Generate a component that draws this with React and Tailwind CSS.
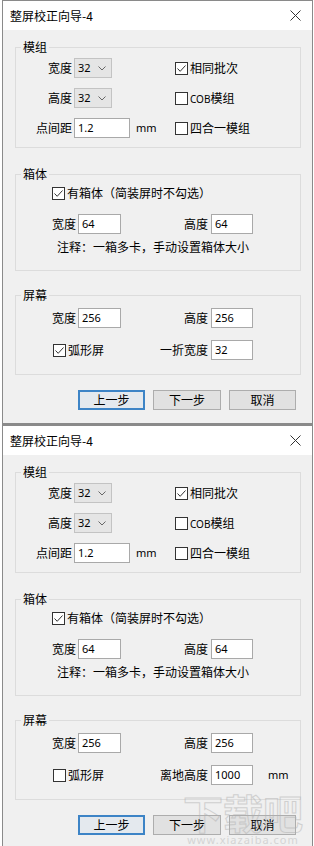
const ui = "font-['Noto_Sans_CJK_SC','Noto_Sans',sans-serif]"
const num = "font-['Noto_Sans','Liberation_Sans',sans-serif]"

function Check({ checked }) {
  return (
    <span className="flex h-[13px] w-[13px] shrink-0 items-center justify-center border border-[#333] bg-white">
      {checked && (
        <svg width="11" height="11" viewBox="0 0 11 11">
          <path d="M1.5 5.5 L4.2 8.3 L9.5 2.5" fill="none" stroke="#333" strokeWidth="1" />
        </svg>
      )}
    </span>
  )
}

function Combo({ value }) {
  return (
    <div className="ml-[2px] flex h-[20px] w-[38px] items-center justify-between border border-[#c3c3c3] bg-[#e5e5e5] pl-[3px] pr-[5px]">
      <span className={`${num} text-[11px] text-black`}>{value}</span>
      <svg width="8" height="5" viewBox="0 0 8 5">
        <path d="M0.5 0.5 L4 4 L7.5 0.5" fill="none" stroke="#666" strokeWidth="1" />
      </svg>
    </div>
  )
}

function Field({ value, w }) {
  return (
    <div className={`flex h-[20px] items-center border border-[#a9a9a9] bg-white pl-[3px] ${w}`}>
      <span className={`${num} text-[11px] text-black`}>{value}</span>
    </div>
  )
}

function Group({ title, className, children }) {
  return (
    <div className={`relative border border-[#dcdcdc] ${className}`}>
      <span className="absolute left-[5px] top-[-9px] bg-[#f0f0f0] px-[2px] leading-[16px]">{title}</span>
      {children}
    </div>
  )
}

function SizeRow({ a, b, className }) {
  return (
    <div className={`flex h-[20px] items-center ${className}`}>
      <span className="w-[60px] text-right">宽度</span>
      <Field value={a} w="ml-[2px] w-[43px]" />
      <span className="w-[87px] text-right">高度</span>
      <Field value={b} w="ml-[3px] w-[42px]" />
    </div>
  )
}

function Dialog({ second }) {
  return (
    <div className={`relative ml-[2px] flex h-[425px] w-[311px] flex-col border-x border-t border-b-2 border-[#8a8a8a] bg-[#f0f0f0] text-[12px] leading-[16px] text-black ${ui}`}>
      <div className="flex h-[29px] items-center justify-between bg-white pl-[7px] pr-[11px]">
        <span>整屏校正向导-4</span>
        <svg width="11" height="11" viewBox="0 0 11 11">
          <path d="M0.5 0.5 L10.5 10.5 M10.5 0.5 L0.5 10.5" stroke="#333" strokeWidth="1" />
        </svg>
      </div>

      <div className="flex-1 pl-[12px] pr-[11px]">
        <Group title="模组" className="mt-[17px] flex flex-col gap-[10px] pb-[9px] pt-[10px]">
          <div className="flex h-[20px] items-center">
            <div className="flex w-[159px] items-center">
              <span className="w-[56px] text-right">宽度</span>
              <Combo value="32" />
            </div>
            <Check checked />
            <span className="ml-[2px]">相同批次</span>
          </div>
          <div className="flex h-[20px] items-center">
            <div className="flex w-[159px] items-center">
              <span className="w-[56px] text-right">高度</span>
              <Combo value="32" />
            </div>
            <Check />
            <span className="ml-[2px]"><span className={`${num} text-[10px]`}>COB</span>模组</span>
          </div>
          <div className="flex h-[20px] items-center">
            <div className="flex w-[159px] items-center">
              <span className="w-[56px] text-right">点间距</span>
              <Field value="1.2" w="ml-[2px] w-[56px]" />
              <span className={`${num} ml-[6px] text-[11px]`}>mm</span>
            </div>
            <Check />
            <span className="ml-[2px]">四合一模组</span>
          </div>
        </Group>

        <Group title="箱体" className="mt-[26px] pb-[15px] pt-[10px]">
          <div className="flex h-[16px] items-center pl-[36px]">
            <Check checked />
            <span className="ml-[2px]">有箱体（简装屏时不勾选）</span>
          </div>
          <SizeRow a="64" b="64" className="mt-[13px]" />
          <div className="mt-[5px] pl-[41px]">注释：一箱多卡，手动设置箱体大小</div>
        </Group>

        <Group title="屏幕" className="mt-[24px] pb-[14px] pt-[12px]">
          <SizeRow a="256" b="256" />
          <div className="mt-[12px] flex h-[20px] items-center">
            <div className="flex w-[105px] items-center pl-[37px]">
              <Check checked={!second} />
              <span className="ml-[2px]">弧形屏</span>
            </div>
            <span className="w-[87px] text-right">{second ? '离地高度' : '一折宽度'}</span>
            <Field value={second ? '1000' : '32'} w="ml-[3px] w-[42px]" />
            {second && <span className={`${num} ml-[15px] text-[11px]`}>mm</span>}
          </div>
        </Group>

        <div className="mt-[15px] flex justify-end gap-[8px] pr-[5px]">
          <button className="h-[20px] w-[67px] border-2 border-[#3d84c6] bg-[#e4e9ee]">上一步</button>
          <button className="h-[20px] w-[68px] border border-[#adadad] bg-[#e1e1e1]">下一步</button>
          <button className="h-[20px] w-[67px] border border-[#adadad] bg-[#e1e1e1]">取消</button>
        </div>
      </div>

      {second && (
        <div className="pointer-events-none absolute left-[180px] top-[364px] flex flex-col items-center whitespace-nowrap opacity-50">
          <span className="text-[40px] font-bold leading-[44px] text-transparent [-webkit-text-stroke:1px_#b0b0b0]">下载吧</span>
          <span className={`${num} text-[11px] leading-[12px] tracking-[1px] text-[#b8b8b8]`}>www.xiazaiba.com</span>
        </div>
      )}
    </div>
  )
}

export default function App() {
  return (
    <div className="h-[846px] w-[314px] overflow-hidden bg-white">
      <Dialog />
      <Dialog second />
    </div>
  )
}
